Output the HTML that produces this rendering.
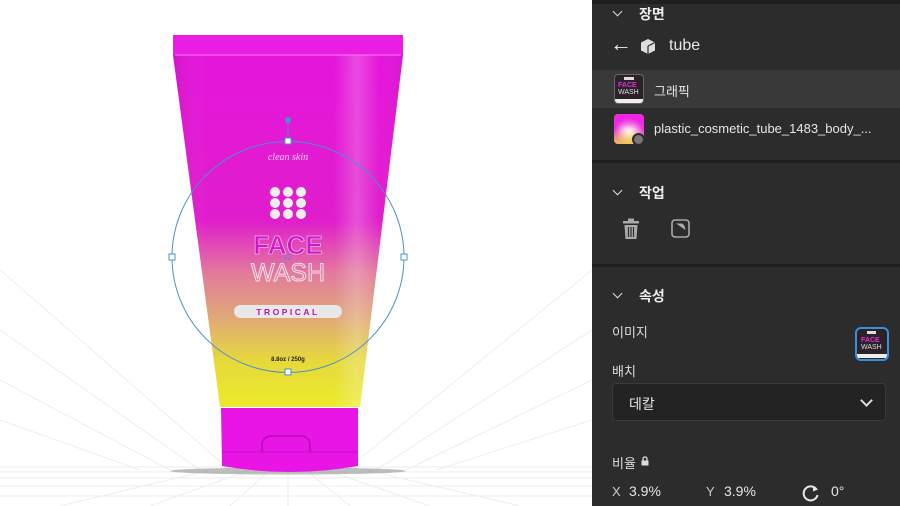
<!DOCTYPE html>
<html><head><meta charset="utf-8"><style>
*{margin:0;padding:0;box-sizing:border-box}
body{width:900px;height:506px;overflow:hidden;background:#fff;position:relative;font-family:"Liberation Sans","Noto Sans CJK KR",sans-serif}
#panel{position:absolute;left:592px;top:0;width:308px;height:506px;background:#2c2c2c;color:#e6e6e6}
.t{position:absolute;white-space:nowrap}
.sep{position:absolute;left:0;width:308px;height:3px;background:#1f1f1f}
.chev{position:absolute;width:7px;height:7px;border-right:1.6px solid #ddd;border-bottom:1.6px solid #ddd;transform:rotate(45deg)}
.hd{font-size:14px;font-weight:bold;color:#eee}
</style></head><body>
<svg width="592" height="506" style="position:absolute;left:0;top:0">
<defs>
<linearGradient id="g" x1="0" y1="0" x2="0" y2="1">
<stop offset="0" stop-color="#e614de"/>
<stop offset="0.5" stop-color="#e01ecc"/>
<stop offset="0.64" stop-color="#e27a9c"/>
<stop offset="0.76" stop-color="#e0a878"/>
<stop offset="0.88" stop-color="#e6da3a"/>
<stop offset="1" stop-color="#ecea2c"/>
</linearGradient>
<linearGradient id="hl" x1="0" y1="0" x2="1" y2="0">
<stop offset="0" stop-color="#000" stop-opacity=".08"/>
<stop offset=".15" stop-color="#fff" stop-opacity="0"/>
<stop offset=".7" stop-color="#fff" stop-opacity="0"/>
<stop offset=".8" stop-color="#fff" stop-opacity=".22"/>
<stop offset=".9" stop-color="#fff" stop-opacity="0"/>
<stop offset="1" stop-color="#000" stop-opacity=".06"/>
</linearGradient>
</defs>
<g stroke="#eceef1" stroke-width="1" fill="none">
<path d="M0 496H592M0 486H592M0 478H592M0 472H592M0 467H592"/>
<path d="M200 470L0 330M170 470L0 380M230 470L0 270M140 470L0 420M376 470L592 330M406 470L592 380M346 470L592 270M436 470L592 420M250 470L150 506M326 470L430 506M210 470L60 506M366 470L520 506M288 470V506M270 470L230 506M306 470L350 506"/>
</g>
<ellipse cx="288" cy="471" rx="118" ry="3.5" fill="#888" opacity=".55"/>
<path d="M173 37 L403 35 L403 55 L360 407 L220 407 L173 55Z" fill="url(#g)"/>
<path d="M173 37 L403 35 L403 55 L360 407 L220 407 L173 55Z" fill="url(#hl)"/>
<rect x="173" y="35" width="230" height="20" fill="#ea1ee2"/>
<line x1="175" y1="55" x2="401" y2="55" stroke="#f27cec" stroke-width="1"/>
<path d="M221 408H358V466Q290 478 222 466Z" fill="#e815e6"/>
<path d="M222 452H358" stroke="#c30fc0" stroke-width="1"/>
<path d="M262 452V446Q262 436 272 436H300Q310 436 310 446V452" fill="none" stroke="#b80ab6" stroke-width="1.5"/>
<text x="288" y="160" font-family="Liberation Serif" font-style="italic" font-size="10" fill="#f4d0f2" text-anchor="middle">clean skin</text>
<g fill="#eee">
<circle cx="275" cy="192" r="5"/><circle cx="288" cy="192" r="5"/><circle cx="301" cy="192" r="5"/>
<circle cx="275" cy="203" r="5"/><circle cx="288" cy="203" r="5"/><circle cx="301" cy="203" r="5"/>
<circle cx="275" cy="214" r="5"/><circle cx="288" cy="214" r="5"/><circle cx="301" cy="214" r="5"/>
</g>
<text x="288" y="254" font-size="26" font-weight="bold" fill="#d018c8" stroke="#f0b0ee" stroke-width=".8" text-anchor="middle">FACE</text>
<text x="288" y="281" font-size="25" fill="none" stroke="#f6e0f0" stroke-width="1" text-anchor="middle">WASH</text>
<rect x="234" y="305" width="108" height="13" rx="6.5" fill="#e8e8e8"/>
<text x="288" y="315" font-size="8.5" font-weight="bold" fill="#b515b0" text-anchor="middle" letter-spacing="2.5">TROPICAL</text>
<text x="288" y="361" font-size="6" font-weight="bold" fill="#222" text-anchor="middle">8.8oz / 250g</text>
<g stroke="#4a90d0" stroke-width="1" fill="none">
<ellipse cx="288" cy="257" rx="116" ry="115.5"/>
<line x1="288" y1="122" x2="288" y2="141"/>
<circle cx="288" cy="257" r="2.5"/>
</g>
<g fill="#fff" stroke="#4a90d0" stroke-width="1">
<circle cx="288" cy="120" r="2.5" fill="#4a90d0"/>
<rect x="285" y="138" width="6" height="6"/><rect x="285" y="369" width="6" height="6"/>
<rect x="169" y="254" width="6" height="6"/><rect x="401" y="254" width="6" height="6"/>
</g>
</svg>
<div id="panel">
<div class="sep" style="top:0;height:4px"></div>
<div class="chev" style="left:22px;top:8px"></div>
<div class="t hd" style="left:47px;top:4px">장면</div>
<div class="t" style="left:18px;top:33px;font-size:22px;line-height:22px;color:#eee">&#8592;</div>
<svg class="t" style="left:48px;top:38px" width="16" height="17" viewBox="0 0 16 17"><path d="M8 1L15 4.5V12.5L8 16L1 12.5V4.5Z" fill="#ddd"/><path d="M8 8L15 4.5M8 8V16" stroke="#2c2c2c" stroke-width="1.2"/></svg>
<div class="t" style="left:77px;top:37px;font-size:16px;color:#e8e8e8">tube</div>
<div class="t" style="left:0;top:70px;width:308px;height:38px;background:#393939"></div>
<div class="t" style="left:22px;top:74px;width:30px;height:30px;border:1px solid #666;border-radius:4px;background:#2a2228;overflow:hidden">
<div style="position:absolute;left:9px;top:2px;width:10px;height:3px;background:#ddd"></div>
<div style="position:absolute;left:3px;top:7px;font-size:7px;font-weight:bold;color:#e030d8;line-height:7px">FACE</div>
<div style="position:absolute;left:3px;top:14px;font-size:7px;color:#ddd;line-height:7px">WASH</div>
<div style="position:absolute;left:0;top:24px;width:30px;height:5px;background:#eee"></div></div>
<div class="t" style="left:62px;top:81px;font-size:13px;color:#e6e6e6">그래픽</div>
<div class="t" style="left:22px;top:114px;width:30px;height:30px;border-radius:4px;background:radial-gradient(circle at 50% 60%,#fff 0,#f8c0e8 25%,#ee30e0 60%)"></div>
<div class="t" style="left:22px;top:114px;width:30px;height:30px;border-radius:4px;background:linear-gradient(#f020e0 10%,rgba(240,240,40,.0) 50%,#eef02a 95%);opacity:.7"></div>
<div class="t" style="left:40px;top:133px;width:13px;height:13px;border-radius:50%;background:#777;border:2px solid #2c2c2c"></div>
<div class="t" style="left:62px;top:121px;font-size:13px;color:#e6e6e6">plastic_cosmetic_tube_1483_body_...</div>
<div class="sep" style="top:160px"></div>
<div class="chev" style="left:22px;top:187px"></div>
<div class="t hd" style="left:47px;top:183px">작업</div>
<svg class="t" style="left:29px;top:218px" width="20" height="22" viewBox="0 0 20 22"><rect x="2" y="3" width="16" height="2.5" fill="#aaa"/><rect x="7" y="0.5" width="6" height="3" fill="#aaa"/><path d="M3.5 7H16.5L15.5 21H4.5Z" fill="#aaa"/><path d="M7.5 9V19M10 9V19M12.5 9V19" stroke="#2c2c2c" stroke-width="1.2"/></svg>
<svg class="t" style="left:79px;top:219px" width="19" height="19" viewBox="0 0 19 19"><rect x="1" y="1" width="17" height="17" rx="3" fill="none" stroke="#aaa" stroke-width="1.6"/><path d="M5 4.5H11Q14 6 14.5 11Z" fill="#aaa"/></svg>
<div class="sep" style="top:264px"></div>
<div class="chev" style="left:22px;top:290px"></div>
<div class="t hd" style="left:47px;top:286px">속성</div>
<div class="t" style="left:20px;top:322px;font-size:13px;color:#ddd">이미지</div>
<div class="t" style="left:263px;top:327px;width:34px;height:34px;border:2.5px solid #3a8ee0;border-radius:6px;background:#2a2228;overflow:hidden">
<div style="position:absolute;left:10px;top:2px;width:9px;height:3px;background:#ddd"></div>
<div style="position:absolute;left:4px;top:8px;font-size:7px;font-weight:bold;color:#e030d8;line-height:7px">FACE</div>
<div style="position:absolute;left:4px;top:15px;font-size:7px;color:#ddd;line-height:7px">WASH</div>
<div style="position:absolute;left:0;top:25px;width:30px;height:4px;background:#eee"></div></div>
<div class="t" style="left:20px;top:361px;font-size:13px;color:#ddd">배치</div>
<div class="t" style="left:20px;top:383px;width:274px;height:38px;background:#232323;border:1px solid #3a3a3a;border-radius:4px"></div>
<div class="t" style="left:37px;top:394px;font-size:14px;color:#e6e6e6">데칼</div>
<div class="chev" style="left:270px;top:396px;width:9px;height:9px;border-width:2px"></div>
<div class="t" style="left:20px;top:453px;font-size:13px;color:#ddd">비율</div>
<svg class="t" style="left:49px;top:456px" width="8" height="10" viewBox="0 0 8 10"><path d="M2 4.5V3Q2 1 4 1Q6 1 6 3V4.5" fill="none" stroke="#ddd" stroke-width="1.3"/><rect x="0.5" y="4.5" width="7" height="5" fill="#ddd"/></svg>
<div class="t" style="left:20px;top:484px;font-size:13px;color:#ccc">X</div>
<div class="t" style="left:37px;top:483px;font-size:14px;color:#e6e6e6">3.9%</div>
<div class="t" style="left:114px;top:484px;font-size:13px;color:#ccc">Y</div>
<div class="t" style="left:132px;top:483px;font-size:14px;color:#e6e6e6">3.9%</div>
<svg class="t" style="left:210px;top:484px" width="18" height="18" viewBox="0 0 18 18"><path d="M14.5 5.5A7 7 0 1 0 15.5 11" fill="none" stroke="#e6e6e6" stroke-width="2"/><path d="M11 1.5L16 5.5L11 7.5Z" fill="#e6e6e6"/></svg>
<div class="t" style="left:239px;top:483px;font-size:14px;color:#e6e6e6">0°</div>
</div>
</body></html>
